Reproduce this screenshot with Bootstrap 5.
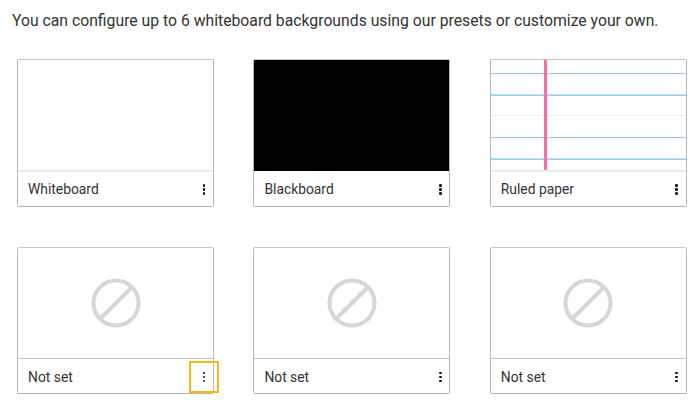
<!DOCTYPE html>
<html lang="en">
<head>
<meta charset="utf-8">
<title>Whiteboard backgrounds</title>
<link href="https://cdn.jsdelivr.net/npm/bootstrap@5.3.0/dist/css/bootstrap.min.css" rel="stylesheet">
<style>
body { font-family: Roboto, "Liberation Sans", sans-serif; background: #fff; color: #333; }
.page-wrap { padding: 11px 13px 0 12px; width: 700px; height: 412px; overflow: hidden; }
.intro-text { font-size: 15.75px; line-height: 20px; margin: 0 0 28px; color: #333; white-space: nowrap; }
.tile-grid { display: grid; grid-template-columns: repeat(3, 197px); column-gap: 39.4px; row-gap: 40px; margin-left: 5px; }
.tile { height: 148px; border: 1px solid #c8c8c8; border-bottom-color: #b4b4b4; border-left-color: #b8b8b8; border-right-color: #b8b8b8; border-radius: 2px; background: #fff; position: relative; }
.tile-empty { height: 147px; }
.tile-pic { height: 112px; border-bottom: 2px solid #ebebeb; position: relative; overflow: hidden; }
.tile-pic-empty { border-bottom: 1px solid #c9c5c2; height: 111px; }
.tile-pic-black { background: #000; background-clip: padding-box; border-bottom: 1px solid #fff; }
.tile-foot { height: 34px; padding: 1px 0 0 10px; }
.tile-empty .tile-foot { padding-top: 2px; }
.tile-label { font-size: 13.85px; color: #333; }
.kebab { width: 18px; height: 18px; padding: 0; border: 0; background: none; gap: 1.6px; }
.kebab i { display: block; width: 2.6px; height: 2.6px; background: #111; border-radius: 50%; }
.kebab-focus { position: absolute; left: 171px; bottom: 0; width: 30px; height: 32px; border: 2px solid #f5b914; }
.rule { position: absolute; left: 0; right: 0; height: 1px; background: #94c8e6; }
.rule-soft { background: #e3f0f8; }
.rule-mid { height: 2px; background: linear-gradient(#c9e3f3, #94c8e6); }
.margin-line { position: absolute; top: 0; bottom: 0; left: 53px; width: 3px; background: #ff69a6; }
.r1 { top: 13px; } .r2 { top: 34px; } .r3 { top: 55px; } .r4 { top: 77px; } .r5 { top: 98px; }
.no-icon { width: 50px; height: 50px; }
</style>
</head>
<body>
<div class="page-wrap">
  <p class="intro-text">You can configure up to 6 whiteboard backgrounds using our presets or customize your own.</p>
  <div class="tile-grid">
    <div class="tile">
      <div class="tile-pic"></div>
      <div class="tile-foot d-flex align-items-center justify-content-between">
        <span class="tile-label">Whiteboard</span>
        <button type="button" class="kebab d-flex flex-column align-items-center justify-content-center" aria-label="More"><i></i><i></i><i></i></button>
      </div>
    </div>
    <div class="tile">
      <div class="tile-pic tile-pic-black"></div>
      <div class="tile-foot d-flex align-items-center justify-content-between">
        <span class="tile-label">Blackboard</span>
        <button type="button" class="kebab d-flex flex-column align-items-center justify-content-center" aria-label="More"><i></i><i></i><i></i></button>
      </div>
    </div>
    <div class="tile">
      <div class="tile-pic">
        <div class="rule r1"></div>
        <div class="rule rule-mid r2"></div>
        <div class="rule rule-soft r3"></div>
        <div class="rule r4"></div>
        <div class="rule rule-mid r5"></div>
        <div class="margin-line"></div>
      </div>
      <div class="tile-foot d-flex align-items-center justify-content-between">
        <span class="tile-label">Ruled paper</span>
        <button type="button" class="kebab d-flex flex-column align-items-center justify-content-center" aria-label="More"><i></i><i></i><i></i></button>
      </div>
    </div>
    <div class="tile tile-empty">
      <div class="tile-pic tile-pic-empty d-flex align-items-center justify-content-center">
        <svg class="no-icon" viewBox="0 0 50 50" fill="none" stroke="#d6d6d6" stroke-width="4"><circle cx="25" cy="25" r="22.5"/><line x1="9" y1="41" x2="41" y2="9"/></svg>
      </div>
      <div class="tile-foot d-flex align-items-center justify-content-between">
        <span class="tile-label">Not set</span>
        <button type="button" class="kebab d-flex flex-column align-items-center justify-content-center" aria-label="More"><i></i><i></i><i></i></button>
      </div>
      <div class="kebab-focus"></div>
    </div>
    <div class="tile tile-empty">
      <div class="tile-pic tile-pic-empty d-flex align-items-center justify-content-center">
        <svg class="no-icon" viewBox="0 0 50 50" fill="none" stroke="#d6d6d6" stroke-width="4"><circle cx="25" cy="25" r="22.5"/><line x1="9" y1="41" x2="41" y2="9"/></svg>
      </div>
      <div class="tile-foot d-flex align-items-center justify-content-between">
        <span class="tile-label">Not set</span>
        <button type="button" class="kebab d-flex flex-column align-items-center justify-content-center" aria-label="More"><i></i><i></i><i></i></button>
      </div>
    </div>
    <div class="tile tile-empty">
      <div class="tile-pic tile-pic-empty d-flex align-items-center justify-content-center">
        <svg class="no-icon" viewBox="0 0 50 50" fill="none" stroke="#d6d6d6" stroke-width="4"><circle cx="25" cy="25" r="22.5"/><line x1="9" y1="41" x2="41" y2="9"/></svg>
      </div>
      <div class="tile-foot d-flex align-items-center justify-content-between">
        <span class="tile-label">Not set</span>
        <button type="button" class="kebab d-flex flex-column align-items-center justify-content-center" aria-label="More"><i></i><i></i><i></i></button>
      </div>
    </div>
  </div>
</div>
<script src="https://cdn.jsdelivr.net/npm/bootstrap@5.3.0/dist/js/bootstrap.bundle.min.js"></script>
</body>
</html>
